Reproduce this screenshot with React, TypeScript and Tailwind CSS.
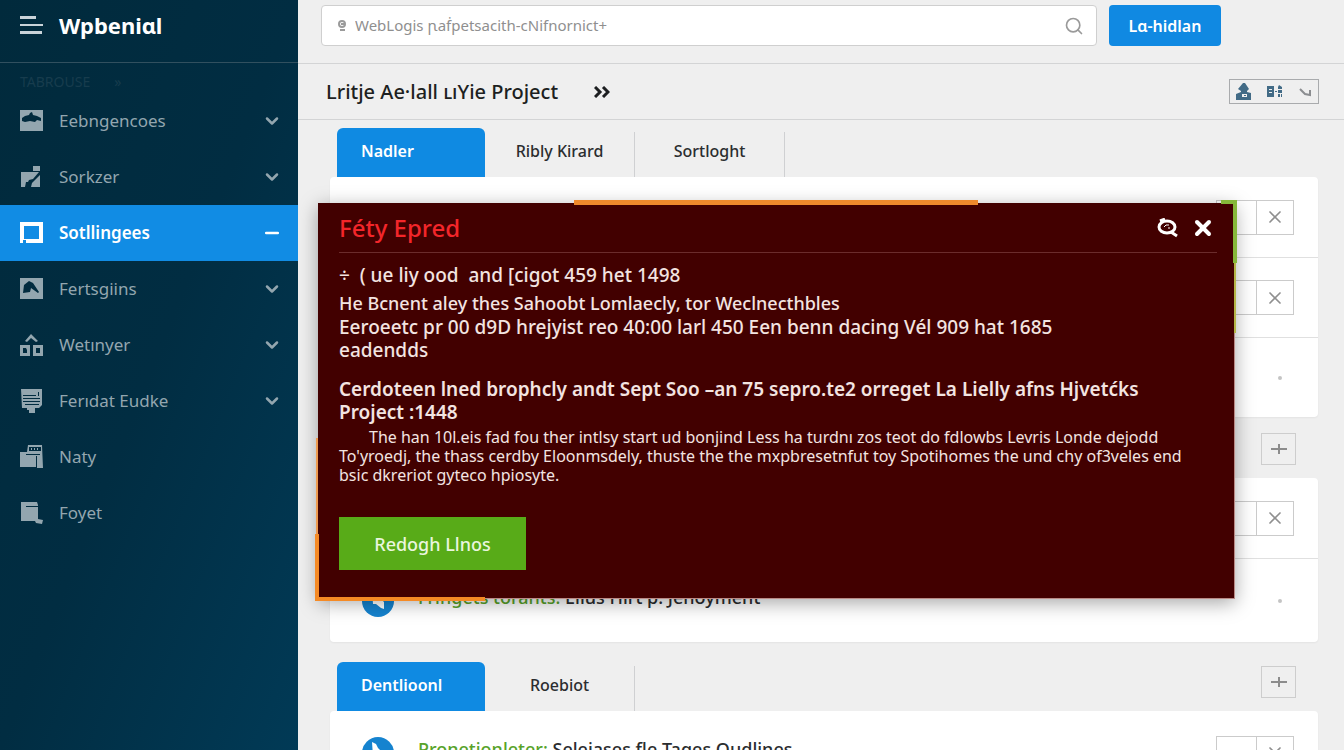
import type { ReactNode } from 'react';
import { ChevronDown, Minus, Search, X } from 'lucide-react';

type NavItem = {
  label: string;
  icon: ReactNode;
  active?: boolean;
  expandable?: boolean;
};

const navItems: NavItem[] = [
  {
    label: 'Eebngencoes',
    expandable: true,
    icon: (
      <path
        fillRule="evenodd"
        d="M0 1h23v21H0zM2 12v-3l3-2 4-1 1-2 2-1 1 3 4 1 4 2v3l-4-1-2 2-5-1-5 1z"
      />
    ),
  },
  {
    label: 'Sorkzer',
    expandable: true,
    icon: <path d="M13 1h7v5h-7zM1 7h11l7 0-6 7-4 1-1 2-2 0-1 5H1zM20 10v12H11l1-4z" />,
  },
  {
    label: 'Sotllingees',
    active: true,
    icon: <path fillRule="evenodd" d="M0 1h23v21H6v-3H3v3H0zM4 5v13h15V5z" />,
  },
  {
    label: 'Fertsgiins',
    expandable: true,
    icon: <path fillRule="evenodd" d="M0 1h23v21H0zM3 16l1-8 5-4 4 2 6 9-1 1-7-5-1 4z" />,
  },
  {
    label: 'Wetınyer',
    expandable: true,
    icon: (
      <path
        fillRule="evenodd"
        d="M5 8l6-7 7 7-2 1-5-4-4 4zM0 12h10v11H0zM3 15v5h4v-3l-1-2zM13 12h10v11H13zM16 15v5h4v-5z"
      />
    ),
  },
  {
    label: 'Ferıdat Eudke',
    expandable: true,
    icon: (
      <path
        fillRule="evenodd"
        d="M1 0h21v16l-3 3h-4v5H9v-3H7v-2H2zM3 6v1h13V6zM3 9v1h17V9zM3 12v1h17v-1zM5 15v1h14v-1zM18 3v4h1V3z"
      />
    ),
  },
  {
    label: 'Naty',
    icon: (
      <path
        fillRule="evenodd"
        d="M8 0h14l1 23h-6V11h-1v11H0V7h7zM9 2v4h12V2zM6 9v1h14V9zM11 3h1v2h-1zM14 3h1v2h-1zM17 3h1v2h-1z"
      />
    ),
  },
  {
    label: 'Foyet',
    icon: <path fillRule="evenodd" d="M1 1l16 0 1 3v14l5 1-1 4-6-1-1-2H1zM6 5v1h12V5z" />,
  },
];

function Sidebar() {
  return (
    <aside className="w-[298px] shrink-0 bg-linear-to-br from-[#012a3c] via-[#012d42] to-[#013a56]">
      <div className="flex h-[63px] items-center gap-4 border-b border-[#31505f] pb-3 pl-5">
        <button aria-label="Menu" className="text-[#c9d3d9]">
          <svg width="23" height="20" fill="currentColor">
            <path d="M0 1h16v3H0zM0 9h23v2H0zM0 16h22v3H0z" />
          </svg>
        </button>
        <h1 className="text-[22px] font-bold text-white">Wpbeniɑl</h1>
      </div>

      <div className="flex h-[30px] items-center gap-6 pt-2 pl-5 text-sm text-[#173c4d]">
        <span>TABROUSE</span>
        <span>»</span>
      </div>

      <nav>
        {navItems.map((item) => (
          <a
            key={item.label}
            href="#"
            className={
              item.active
                ? 'flex h-14 items-center gap-4 bg-[#118ce4] pr-4 pl-5 font-semibold text-white'
                : 'flex h-14 items-center gap-4 pr-4 pl-5 text-[#93a6af]'
            }
          >
            <svg width="23" height="24" fill="currentColor">
              {item.icon}
            </svg>
            <span className="flex-1 text-[17px]">{item.label}</span>
            {item.expandable && <ChevronDown size={20} strokeWidth={3} />}
            {item.active && <Minus size={20} strokeWidth={3} />}
          </a>
        ))}
      </nav>
    </aside>
  );
}

function TopBar() {
  return (
    <header className="flex h-16 items-center gap-3 border-b border-[#d3d4d5] pr-[123px] pb-3 pl-[23px]">
      <label className="flex h-[41px] flex-1 items-center gap-2 rounded-sm border border-[#cfcfcf] bg-white pr-3 pl-4 text-[#9a9a9a]">
        <svg width="9" height="12" fill="none" stroke="currentColor" strokeWidth="2">
          <circle cx="4" cy="4" r="3" />
          <path d="M2 10h5M3 4h3" />
        </svg>
        <input
          type="search"
          aria-label="Search"
          placeholder="WebLogis ꞃaḟpetsacith-cNifnornict+"
          className="min-w-0 flex-1 bg-transparent text-[15px] outline-none placeholder:text-[#8f8f8f]"
        />
        <Search size={20} />
      </label>
      <button className="h-[41px] w-28 rounded bg-[#1089e2] text-base font-semibold text-white">
        Lɑ-hidlan
      </button>
    </header>
  );
}

function TitleBar() {
  return (
    <div className="flex h-14 items-center border-b border-[#d3d4d5] pr-[25px] pl-7">
      <h2 className="text-xl font-medium text-[#1d1f21]">Lritje Ae·lall ʟıYie Project</h2>
      <svg className="ml-9" width="16" height="12" fill="none" stroke="#1d1f21" strokeWidth="3">
        <path d="M1 1l5 5-5 5M9 1l5 5-5 5" />
      </svg>
      <div className="ml-auto flex h-[25px] w-[90px] items-center justify-between border border-[#a9abad] px-[6px] text-[#426b86]">
        <button aria-label="Account">
          <svg width="15" height="17" fill="currentColor">
            <path fillRule="evenodd" d="M7 0l2 0 4 6-2 2v1l4 1v7H0v-6l5-2V8L2 6zM6 11v3h5v-3zM8 12h2v1H8z" />
          </svg>
        </button>
        <button aria-label="Layout">
          <svg width="16" height="13" fill="currentColor">
            <path fillRule="evenodd" d="M1 1h6v11H0V1zM2 4v1h3V4zM2 7v1h3V7zM8 6h2v1H8zM12 0l3 2v2h-4V2zM11 5h4v3h-4zM11 9h2v3h-2zM14 9h1v3h-1z" />
          </svg>
        </button>
        <button aria-label="More" className="text-[#8b8d90]">
          <svg width="13" height="10" fill="none" stroke="currentColor" strokeWidth="2">
            <path d="M1 2l5 5 5 1V3" />
          </svg>
        </button>
      </div>
    </div>
  );
}

function Tabs({ tabs }: { tabs: string[] }) {
  return (
    <div className="flex items-stretch">
      {tabs.map((tab, i) =>
        i === 0 ? (
          <button
            key={tab}
            className="h-[49px] w-[148px] rounded-t-md bg-[#0f8ae2] pb-1 pl-6 text-left font-semibold text-white"
          >
            {tab}
          </button>
        ) : (
          <button
            key={tab}
            className="mt-1 h-[45px] w-[150px] border-r border-[#cfd0d2] pb-2 font-medium text-[#2b2d2f]"
          >
            {tab}
          </button>
        ),
      )}
    </div>
  );
}

function AddButton() {
  return (
    <button
      aria-label="Add"
      className="mt-1 mr-[22px] ml-auto flex h-8 w-[35px] items-center justify-center border border-[#cdcdcd] text-[#8c8c8c]"
    >
      <svg width="18" height="12" fill="none" stroke="currentColor" strokeWidth="2">
        <path d="M1 6h16M9 1v10" />
      </svg>
    </button>
  );
}

type RowProps = {
  accent?: string;
  text?: string;
  actions?: boolean;
  tall?: boolean;
};

function Row({ accent, text, actions, tall }: RowProps) {
  return (
    <li
      className={`flex items-center border-t border-[#e0e0e0] pr-6 pl-8 first:border-t-0 ${tall ? 'h-[84px]' : 'h-20'}`}
    >
      {text && (
        <>
          <svg width="32" height="32" viewBox="0 0 32 32">
            <circle cx="16" cy="16" r="16" fill="#1583cf" />
            <path d="M10 5l4 2 2 4 6 6v7l-3-1-5-4-3 0z" fill="#fff" />
          </svg>
          <p className="ml-6 pb-2 text-lg font-medium text-[#2b2d2f]">
            <span className="text-[#58a32a]">{accent}</span> {text}
          </p>
        </>
      )}
      {actions ? (
        <div className="ml-auto flex h-[35px] border border-[#cbcbcb] text-[#8f8f8f]">
          <button aria-label="Edit" className="w-10 border-r border-[#cbcbcb]" />
          <button aria-label="Remove" className="flex w-9 items-center justify-center">
            <X size={20} strokeWidth={2} />
          </button>
        </div>
      ) : (
        <span className="mr-3 ml-auto size-1 rounded-full bg-[#c4c4c4]" />
      )}
    </li>
  );
}

function Card({ children }: { children: ReactNode }) {
  return <ul className="rounded-sm bg-white shadow-xs">{children}</ul>;
}

function ErrorDialog() {
  return (
    <div
      role="dialog"
      aria-labelledby="dialog-title"
      className="absolute top-[203px] right-[109px] left-5 border-r border-b border-[#b98a86] bg-[#420000] px-[21px] pb-7 text-[#f3e4e1] shadow-[0_4px_18px_rgba(0,0,0,0.35)]"
    >
      {/* frame accents */}
      <span className="absolute -top-[3px] right-[28%] left-[28%] h-[5px] bg-[#ef8a2c]" />
      <span className="absolute -top-[3px] -right-[3px] h-[63px] w-4 border-t-4 border-r-4 border-[#86b83a]" />
      <span className="absolute top-[60px] -right-0.5 h-[70px] w-0.5 bg-[#b5b548]" />
      <span className="absolute bottom-16 -left-0.5 h-24 w-0.5 bg-[#ee9a50]" />
      <span className="absolute -bottom-[3px] -left-[3px] h-[67px] w-[170px] border-b-4 border-l-4 border-[#f58a25]" />

      <div className="-mr-1 flex h-[50px] items-center border-b border-[#6b2c2c]">
        <h3 id="dialog-title" className="text-2xl font-medium text-[#f3262a]">
          Féty Epred
        </h3>
        <button aria-label="Inspect" className="ml-auto text-white">
          <svg width="22" height="20" viewBox="0 0 22 20" fill="none" stroke="currentColor">
            <ellipse cx="10" cy="9" rx="8" ry="6" strokeWidth="3" />
            <path d="M14 14l6 4M3 3l5-2" strokeWidth="3" />
            <path d="M7 9l2-2 3 0M11 10h2" strokeWidth="1" />
          </svg>
        </button>
        <button aria-label="Close" className="mr-0.5 ml-3 text-white">
          <X size={24} strokeWidth={4} />
        </button>
      </div>

      <p className="mt-2 text-[19px] leading-[29px] font-medium">
        ÷&nbsp; ( ue liy ood &nbsp;and [cigot 459 het 1498
      </p>
      <p className="text-lg leading-[26px] font-medium">
        He Bcnent aley thes Sahoobt Lomlaecly, tor Weclnecthbles
      </p>
      <p className="text-[19px] leading-[23px] font-medium">
        Eeroeetc pr 00 d9D hrejyist reo 40:00 larl 450 Een benn dacing Vél 909 hat 1685
        <br />
        eadendds
      </p>
      <p className="mt-4 text-[19px] leading-[23px] font-semibold">
        Cerdoteen lned brophcly andt Sept Soo –an 75 sepro.te2 orreget La Lielly afns Hjvetćks
        <br />
        Project :1448
      </p>
      <p className="mt-1 indent-[30px] text-base leading-[19px]">
        The han 10l.eis fad fou ther intlsy start ud bonjind Less ha turdnı zos teot do fdlowbs Levris Londe dejodd
        <br />
        To'yroedj, the thass cerdby Eloonmsdely, thuste the the mxpbresetnfut toy Spotihomes the und chy of3veles end
        <br />
        bsic dkreriot gyteco hpiosyte.
      </p>
      <button className="mt-8 h-[53px] w-[187px] bg-[#58ab18] text-lg font-medium text-[#eaf6df]">
        Redogh Llnos
      </button>
    </div>
  );
}

export default function App() {
  return (
    <div className="flex h-screen overflow-hidden bg-[#efefef] font-['Noto_Sans','Open_Sans',sans-serif]">
      <Sidebar />

      <main className="relative min-w-0 flex-1 overflow-hidden">
        <TopBar />
        <TitleBar />

        <div className="pr-[26px] pl-8">
          <section className="pt-2">
            <div className="flex pl-[7px]">
              <Tabs tabs={['Nadler', 'Ribly Kirard', 'Sortloght']} />
            </div>
            <Card>
              <Row actions />
              <Row actions />
              <Row />
            </Card>
          </section>

          <section className="pt-3">
            <div className="flex h-[49px] pl-[7px]">
              <AddButton />
            </div>
            <Card>
              <Row actions />
              <Row accent="Fringets torants:" text="Ellus Hirt p. Jenoyment" tall />
            </Card>
          </section>

          <section className="pt-5">
            <div className="flex pl-[7px]">
              <Tabs tabs={['Dentlioonl', 'Roebiot']} />
              <AddButton />
            </div>
            <Card>
              <Row accent="Pronetionleter:" text="Seleiases fle Tages Oudlines" actions tall />
            </Card>
          </section>
        </div>

        <ErrorDialog />
      </main>
    </div>
  );
}
